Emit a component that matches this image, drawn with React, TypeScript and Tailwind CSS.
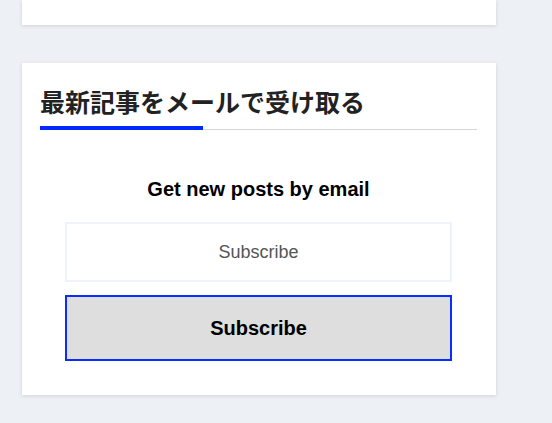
import React from 'react';

const App: React.FC = () => {
  return (
    <div className="min-h-[423px] w-[552px] bg-[#edf0f5] pl-[22px] font-['Liberation_Sans',Arial,sans-serif]">
      {/* previous widget, cut off at the top */}
      <div className="h-[25px] w-[474px] bg-white shadow-[0_1px_4px_rgba(0,0,0,0.13)]"></div>

      {/* subscribe widget */}
      <div className="mt-[38px] w-[474px] bg-white pl-[18px] pr-[19px] pt-[23px] pb-[34px] shadow-[0_1px_4px_rgba(0,0,0,0.13)]">
        <div className="relative border-b border-[#d6d6d9] pb-[13px]">
          <h2 className="font-['Noto_Sans_CJK_JP',sans-serif] text-[25px] leading-[30px] font-bold text-[#222]">
            最新記事をメールで受け取る
          </h2>
          <div className="absolute -bottom-px left-0 h-[4px] w-[163px] bg-[#0029ff]"></div>
        </div>

        <div className="flex flex-col items-center px-[25px] pt-[47px]">
          <p className="text-[20px] leading-[24px] font-bold text-black">Get new posts by email</p>
          <input
            type="text"
            placeholder="Subscribe"
            className="mt-[21px] h-[60px] w-full border-2 border-[#eef2fb] bg-white text-center text-[18px] text-[#444] outline-none placeholder:text-[#555]"
          />
          <button className="mt-[13px] h-[66px] w-full border-2 border-[#0a2dff] bg-[#dedede] text-[20px] font-bold text-black">
            Subscribe
          </button>
        </div>
      </div>
    </div>
  );
};

export default App;
